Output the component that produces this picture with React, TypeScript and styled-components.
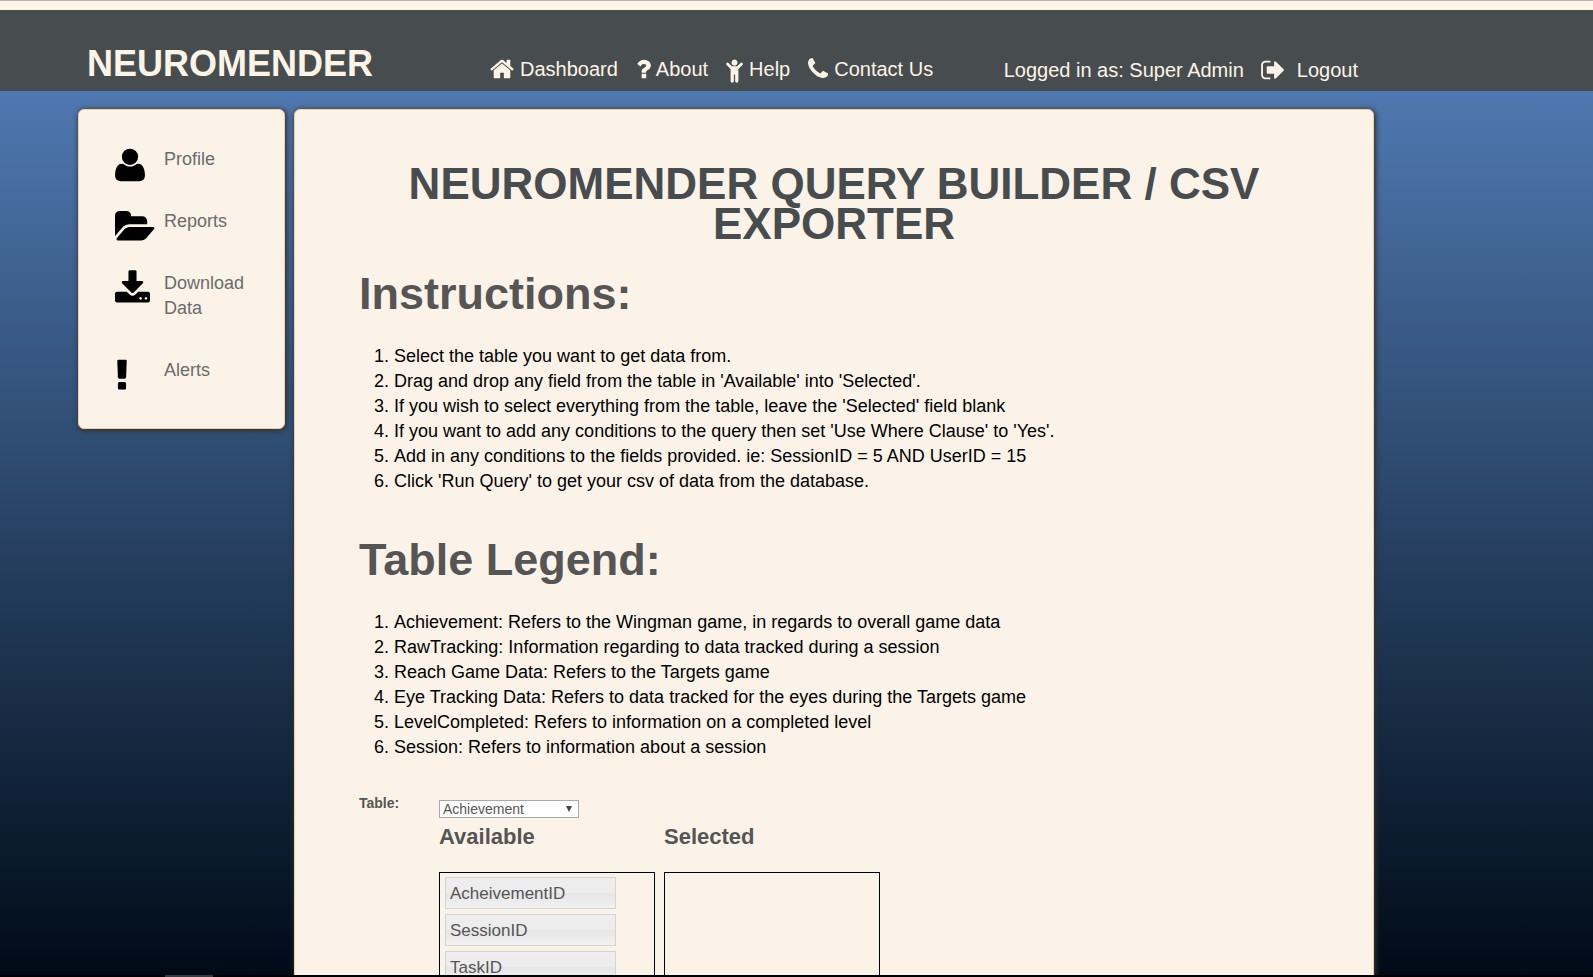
import React from "react";
import styled, { createGlobalStyle } from "styled-components";

const GlobalStyle = createGlobalStyle`
  *, *::before, *::after { box-sizing: border-box; }
  body {
    margin: 0;
    font-family: "Liberation Sans", Arial, Helvetica, sans-serif;
    font-size: 18px;
    line-height: 25px;
    color: #000;
  }
`;

const Screen = styled.div`
  display: flex;
  flex-direction: column;
  height: 100vh;
`;

const TopStrip = styled.div`
  flex: none;
  height: 10px;
  background: #fdf4e8;
  border-top: 1px solid #b5b2b8;
`;

const Page = styled.div`
  flex: 1;
  min-height: 0;
  overflow: hidden;
  background: linear-gradient(#5079b3 0, #4f78b0 81px, #000b17 100%);
`;

const Header = styled.header`
  display: flex;
  align-items: flex-end;
  height: 81px;
  padding: 0 219px 8px 87px;
  background: #474c4e;
  color: #fdf4e8;
`;

const Brand = styled.a`
  width: 403px;
  padding-bottom: 1px;
  color: inherit;
  font-size: 36px;
  font-weight: bold;
  line-height: 36px;
  text-decoration: none;
`;

const Nav = styled.nav`
  display: flex;
  flex: 1;
  gap: 18px;
  padding-bottom: 1px;
`;

const Account = styled.div`
  display: flex;
  gap: 17px;
  padding-right: 16px;
  font-size: 20px;
  line-height: 26px;
`;

const NavLink = styled.a<{ $gap?: number }>`
  display: flex;
  align-items: center;
  gap: ${(p) => p.$gap ?? 6}px;
  color: inherit;
  font-size: 20px;
  line-height: 26px;
  white-space: nowrap;
  text-decoration: none;
`;

const Columns = styled.div`
  display: grid;
  grid-template-columns: 207px 1fr;
  align-items: start;
  gap: 9px;
  padding: 18px 219px 0 78px;
`;

const Card = styled.div`
  background: #fcf3e8;
  border: 1px solid #f3cf9e;
  border-radius: 6px;
  box-shadow: 1px 1px 5px 1px #333;
`;

const Sidebar = styled(Card).attrs({ as: "aside" })`
  padding: 37px 36px 45px;
`;

const SideLink = styled.a`
  display: grid;
  grid-template-columns: 49px 1fr;
  align-items: start;
  padding-bottom: 37px;
  color: #6b6b6b;
  text-decoration: none;

  &:last-child { padding-bottom: 0; }
  svg {
    margin: -1px 0 -12px;
    color: #000;
  }
`;

const Main = styled(Card).attrs({ as: "main" })`
  padding: 54px 64px 40px;
`;

const PageTitle = styled.h1`
  margin: 0 0 17px;
  color: #474c4e;
  font-size: 44px;
  line-height: 40px;
  text-align: center;
  text-transform: uppercase;
`;

const SectionTitle = styled.h2`
  margin: 0;
  padding-top: 6px;
  color: #555;
  font-size: 45px;
  line-height: 54px;
`;

const Steps = styled.ol`
  margin: 23px 0 33px;
  padding-left: 35px;
`;

const Builder = styled.form`
  display: grid;
  grid-template-columns: 71px 216px 216px;
  column-gap: 9px;
  color: #555;
`;

const Label = styled.label`
  font-size: 14px;
  font-weight: bold;
  line-height: 20px;
`;

const Select = styled.select`
  width: 100%;
  height: 18px;
  padding: 0 0 0 3px;
  border: 1px solid #a9a9a9;
  border-radius: 0;
  appearance: none;
  color: #555;
  font: 14px/16px "Liberation Sans", Arial, sans-serif;
  background: #fff;
`;

const SelectWrap = styled.div`
  position: relative;
  grid-column: 2 / 4;
  width: 140px;
  height: 31px;
  padding-top: 7px;
  line-height: 18px;
  display: flex;

  &::after {
    content: "";
    position: absolute;
    right: 7px;
    top: 13px;
    border: 3px solid transparent;
    border-top: 6px solid #444;
    border-bottom: 0;
    pointer-events: none;
  }
`;

const Bucket = styled.section<{ $first?: boolean }>`
  ${(p) => p.$first && "grid-column: 2;"}
`;

const BucketTitle = styled.h3`
  margin: 0 0 22px;
  font-size: 22px;
  line-height: 26px;
`;

const DropList = styled.ul`
  display: flex;
  flex-direction: column;
  gap: 5px;
  min-height: 300px;
  margin: 0;
  padding: 4px 5px;
  border: 1px solid #000;
  list-style: none;
`;

const Field = styled.li`
  width: 171px;
  height: 32px;
  padding: 0 4px;
  border: 1px solid #d3d3d3;
  background: linear-gradient(#eee 0, #ececec 50%, #e5e5e5 50%, #f2f2f2 100%);
  font-size: 17px;
  line-height: 31px;
  cursor: move;
`;

const Taskbar = styled.div`
  flex: none;
  height: 2px;
  padding-left: 165px;
  background: #000;

  &::before {
    content: "";
    display: block;
    width: 48px;
    height: 2px;
    background: #3a3a3f;
  }
`;

const Glyph = styled.svg`
  display: block;
  flex: none;
  overflow: visible;
  fill: currentColor;
`;

type Shape = { d: string; x: number; w: number };

const shapes: Record<string, Shape> = {
  home: {
    x: 64, w: 1664,
    d: "M1472 992v480q0 26-19 45t-45 19h-384v-384h-256v384h-384q-26 0-45-19t-19-45v-480q0-1 .5-3t.5-3l575-474 575 474q1 2 1 6zm223-69l-62 74q-8 9-21 11h-3q-13 0-21-7l-692-577-692 577q-12 8-24 7-13-2-21-11l-62-74q-8-10-7-23.5t11-21.5l719-599q32-26 76-26t76 26l244 204v-195q0-14 9-23t23-9h192q14 0 23 9t9 23v408l219 182q10 8 11 21.5t-7 23.5z",
  },
  question: {
    x: 384, w: 960,
    d: "M1088 1256v240q0 16-12 28t-28 12h-240q-16 0-28-12t-12-28v-240q0-16 12-28t28-12h240q16 0 28 12t12 28zm316-600q0 54-15.5 101t-35 76.5-55 59.5-57.5 43.5-61 35.5q-41 23-68.5 65t-27.5 67q0 17-12 32.5t-28 15.5h-240q-15 0-25.5-18.5t-10.5-37.5v-45q0-83 65-156.5t143-108.5q59-27 84-56t25-76q0-42-46.5-74t-107.5-32q-65 0-108 29-35 25-107 115-13 16-31 16-12 0-25-8l-164-125q-13-10-15.5-25t5.5-28q160-266 464-266 80 0 161 31t146 83 106 127.5 41 158.5z",
  },
  child: {
    x: 320, w: 1152,
    d: "M1444 620l-280 280v824q0 46-33 79t-79 33-79-33-33-79v-424h-88v424q0 46-33 79t-79 33-79-33-33-79v-824l-280-280q-28-28-28-68t28-68 68-28 68 28l228 228h368l228-228q28-28 68-28t68 28 28 68-28 68zM1104 450q0 86-61 147t-147 61-147-61-61-147 61-147 147-61 147 61 61 147z",
  },
  phone: {
    x: 192, w: 1408,
    d: "M1600 1240q0 27-10 70.5t-21 68.5q-21 50-122 106-94 51-186 51-27 0-52.5-3.5t-57.5-12.5-47.5-14.5-55.5-20.5-49-18q-98-35-175-83-128-79-264.5-215.5t-215.5-264.5q-48-77-83-175-3-9-18-49t-20.5-55.5-14.5-47.5-12.500-57.5-3.5-52.5q0-92 51-186 56-101 106-122 25-11 68.5-21t70.5-10q14 0 21 3 18 6 53 76 11 19 30 54t35 63.5 31 53.5q3 4 17.5 25t21.5 35.5 7 28.5q0 20-28.5 50t-62 55-62 53-28.5 46q0 9 5 22.5t8.5 20.5 14 24 11.5 19q76 137 174 235t235 174q2 1 19 11.5t24 14 20.5 8.5 22.5 5q18 0 46-28.5t53-62 55-62 50-28.5q14 0 28.5 7t35.5 21.5 25 17.5q25 15 53.5 31t63.5 35 54 30q70 35 76 53 3 7 3 21z",
  },
  signOut: {
    x: 64, w: 1568,
    d: "M704 1440q0 4 1 20t.5 26.5-3 23.5-10 19.5-20.5 6.5h-320q-119 0-203.5-84.5t-84.5-203.5v-704q0-119 84.5-203.5t203.5-84.5h320q13 0 22.5 9.5t9.5 22.5q0 4 1 20t.5 26.5-3 23.5-10 19.5-20.5 6.5h-320q-66 0-113 47t-47 113v704q0 66 47 113t113 47h312l11.5 1 11.5 3 8 5.5 7 9 2 13.5zm928-544q0 26-19 45l-544 544q-19 19-45 19t-45-19-19-45v-288h-448q-26 0-45-19t-19-45v-384q0-26 19-45t45-19h448v-288q0-26 19-45t45-19 45 19l544 544q19 19 19 45z",
  },
  user: {
    x: 192, w: 1408,
    d: "M1600 1405q0 120-73 189.5t-194 69.5h-874q-121 0-194-69.5t-73-189.5q0-53 3.5-103.5t14-109 26.5-108.5 43-97.5 62-81 85.5-53.5 111.5-20q9 0 42 21.5t74.5 48 108 48 133.5 21.5 133.5-21.5 108-48 74.5-48 42-21.5q61 0 111.5 20t85.5 53.5 62 81 43 97.5 26.5 108.5 14 109 3.500 103.5zm-320-893q0 159-112.5 271.5t-271.5 112.5-271.5-112.5-112.5-271.5 112.5-271.5 271.5-112.5 271.5 112.5 112.5 271.5z",
  },
  folder: {
    x: -64, w: 1815,
    d: "M1815 952q0 31-31 66l-336 396q-43 51-120.5 86.5t-143.5 35.5h-1088q-34 0-60.5-13t-26.500-43q0-31 31-66l336-396q43-51 120.5-86.5t143.5-35.5h1088q34 0 60.5 13t26.5 43zm-343-344v160h-832q-94 0-197 47.5t-164 119.5l-337 396-5 6q0-4-.5-12.5t-.5-12.5v-960q0-92 66-158t158-66h320q92 0 158 66t66 158v32h544q92 0 158 66t66 158z",
  },
  download: {
    x: 64, w: 1664,
    d: "M1344 1344q0-26-19-45t-45-19-45 19-19 45 19 45 45 19 45-19 19-45zm256 0q0-26-19-45t-45-19-45 19-19 45 19 45 45 19 45-19 19-45zm128-224v320q0 40-28 68t-68 28h-1472q-40 0-68-28t-28-68v-320q0-40 28-68t68-28h465l135 136q58 56 136 56t136-56l136-136h464q40 0 68 28t28 68zm-325-569q17 41-14 70l-448 448q-18 19-45 19t-45-19l-448-448q-31-29-14-70 17-39 59-39h256v-448q0-26 19-45t45-19h256q26 0 45 19t19 45v448h256q42 0 59 39z",
  },
  alert: {
    x: 576, w: 640,
    d: "M1088 1248v224q0 26-19 45t-45 19h-256q-26 0-45-19t-19-45v-224q0-26 19-45t45-19h256q26 0 45 19t19 45zm30-1056l-28 768q-1 26-20.5 45t-45.5 19h-256q-26 0-45.5-19t-20.5-45l-28-768q-1-26 17.5-45t44.5-19h320q26 0 44.5 19t17.5 45z",
  },
};

function Icon({ name, size }: { name: string; size: number }) {
  const { d, x, w } = shapes[name];
  return (
    <Glyph
      aria-hidden="true"
      width={Math.round((w * size) / 1792)}
      height={size}
      viewBox={`${x} 0 ${w} 1792`}
    >
      <path d={d} />
    </Glyph>
  );
}

const navItems = [
  { icon: "home", text: "Dashboard" },
  { icon: "question", text: "About" },
  { icon: "child", text: "Help" },
  { icon: "phone", text: "Contact Us" },
];

const sideItems = [
  { icon: "user", text: "Profile" },
  { icon: "folder", text: "Reports" },
  { icon: "download", text: "Download Data" },
  { icon: "alert", text: "Alerts" },
];

const instructions = [
  "Select the table you want to get data from.",
  "Drag and drop any field from the table in 'Available' into 'Selected'.",
  "If you wish to select everything from the table, leave the 'Selected' field blank",
  "If you want to add any conditions to the query then set 'Use Where Clause' to 'Yes'.",
  "Add in any conditions to the fields provided. ie: SessionID = 5 AND UserID = 15",
  "Click 'Run Query' to get your csv of data from the database.",
];

const legend = [
  "Achievement: Refers to the Wingman game, in regards to overall game data",
  "RawTracking: Information regarding to data tracked during a session",
  "Reach Game Data: Refers to the Targets game",
  "Eye Tracking Data: Refers to data tracked for the eyes during the Targets game",
  "LevelCompleted: Refers to information on a completed level",
  "Session: Refers to information about a session",
];

const fields = ["AcheivementID", "SessionID", "TaskID"];

export default function App() {
  return (
    <Screen>
      <GlobalStyle />
      <TopStrip />
      <Page>
        <Header>
          <Brand href="#">NEUROMENDER</Brand>
          <Nav>
            {navItems.map((item) => (
              <NavLink key={item.text} href="#">
                <Icon name={item.icon} size={26} />
                {item.text}
              </NavLink>
            ))}
          </Nav>
          <Account>
            <span>Logged in as: Super Admin</span>
            <NavLink href="#" $gap={13}>
              <Icon name="signOut" size={26} />
              Logout
            </NavLink>
          </Account>
        </Header>
        <Columns>
          <Sidebar>
            {sideItems.map((item) => (
              <SideLink key={item.text} href="#">
                <Icon name={item.icon} size={38} />
                <span>{item.text}</span>
              </SideLink>
            ))}
          </Sidebar>
          <Main>
            <PageTitle>Neuromender Query Builder / CSV Exporter</PageTitle>
            <SectionTitle>Instructions:</SectionTitle>
            <Steps>
              {instructions.map((line) => (
                <li key={line}>{line}</li>
              ))}
            </Steps>
            <SectionTitle>Table Legend:</SectionTitle>
            <Steps>
              {legend.map((line) => (
                <li key={line}>{line}</li>
              ))}
            </Steps>
            <Builder>
              <Label htmlFor="table">Table:</Label>
              <SelectWrap>
                <Select id="table" defaultValue="Achievement">
                  <option>Achievement</option>
                </Select>
              </SelectWrap>
              <Bucket $first>
                <BucketTitle>Available</BucketTitle>
                <DropList>
                  {fields.map((field) => (
                    <Field key={field}>{field}</Field>
                  ))}
                </DropList>
              </Bucket>
              <Bucket>
                <BucketTitle>Selected</BucketTitle>
                <DropList />
              </Bucket>
            </Builder>
          </Main>
        </Columns>
      </Page>
      <Taskbar />
    </Screen>
  );
}
